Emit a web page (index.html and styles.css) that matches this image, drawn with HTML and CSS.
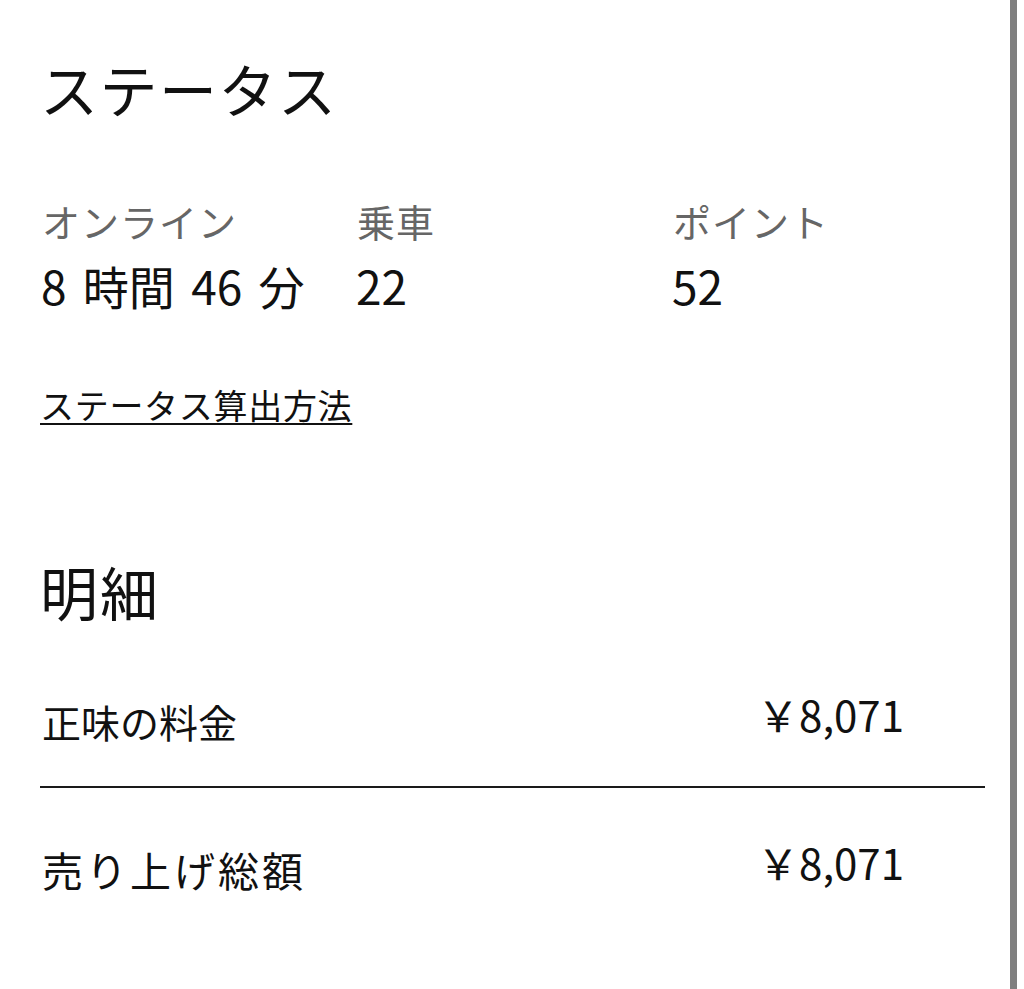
FILE: index.html
```html
<!DOCTYPE html>
<html lang="ja">
<head>
<meta charset="utf-8">
<link rel="stylesheet" href="styles.css">
</head>
<body>
<div class="layout">
  <main class="page">
    <section class="status">
      <h1 class="title title-status">ステータス</h1>
      <div class="stats">
        <div class="stat">
          <div class="stat-label">オンライン</div>
          <div class="stat-value">8 時間 46 分</div>
        </div>
        <div class="stat">
          <div class="stat-label">乗車</div>
          <div class="stat-value">22</div>
        </div>
        <div class="stat">
          <div class="stat-label">ポイント</div>
          <div class="stat-value">52</div>
        </div>
      </div>
      <a class="link" href="#">ステータス算出方法</a>
    </section>
    <section class="details">
      <h2 class="title title-details">明細</h2>
      <div class="row row-first">
        <span class="row-label">正味の料金</span>
        <span class="row-amount">￥8,071</span>
      </div>
      <div class="divider"></div>
      <div class="row">
        <span class="row-label row-label-wide">売り上げ総額</span>
        <span class="row-amount">￥8,071</span>
      </div>
    </section>
  </main>
  <div class="scrollbar"></div>
</div>
</body>
</html>
```

FILE: styles.css
```css
html, body {
  margin: 0;
  padding: 0;
  background: #ffffff;
}

body {
  font-family: "Noto Sans CJK JP", "Noto Sans", sans-serif;
  color: #111111;
}

.layout {
  display: flex;
  height: 989px;
}

.page {
  flex: 1;
  padding: 48px 25px 0 40px;
  display: flex;
  flex-direction: column;
}

.scrollbar {
  width: 7px;
  background: #7f7f7f;
  margin-right: 7px;
}

.title {
  margin: 0;
  font-size: 58px;
  font-weight: 400;
  line-height: 80px;
}

.title-status {
  letter-spacing: 1.5px;
}

.title-details {
  letter-spacing: 2px;
}

.stats {
  display: grid;
  grid-template-columns: 315px 316px 1fr;
  margin-top: 69px;
}

.stat-label {
  font-size: 38px;
  line-height: 48px;
  color: #666666;
  padding-left: 2px;
  letter-spacing: 1px;
}

.stat-value {
  font-size: 46px;
  line-height: 56px;
  margin-top: 12px;
  padding-left: 1px;
  word-spacing: 6px;
}

.link {
  display: inline-block;
  align-self: flex-start;
  margin-top: 70px;
  font-size: 34px;
  line-height: 44px;
  color: #111111;
  letter-spacing: 0.7px;
  text-decoration: underline;
  text-underline-offset: 4px;
  text-decoration-thickness: 2px;
}

.details {
  margin-top: 124px;
}

.row {
  display: flex;
  justify-content: space-between;
  align-items: center;
  padding-right: 81px;
  padding-left: 2px;
}

.row-first {
  margin-top: 62px;
}

.row-label {
  font-size: 39px;
  line-height: 56px;
}

.row-label-wide {
  font-size: 41px;
  letter-spacing: 3px;
}

.row-amount {
  font-size: 42px;
  line-height: 56px;
  margin-top: -14px;
}

.divider {
  height: 2px;
  background: #1a1a1a;
  margin: 37px 0 53px;
}
```
